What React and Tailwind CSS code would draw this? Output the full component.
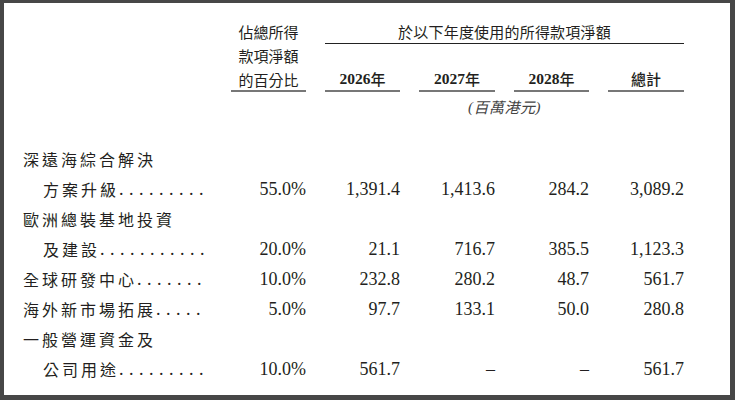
import React from "react";

const CJK = "font-['Noto_Sans_CJK_TC','Noto_Sans_CJK_SC',sans-serif]";
const SERIF = "font-['Liberation_Serif','Noto_Sans_CJK_TC',serif]";

const rows = [
  { label: "深遠海綜合解決", indent: false },
  { label: "方案升級", indent: true, dots: 9, vals: ["55.0%", "1,391.4", "1,413.6", "284.2", "3,089.2"] },
  { label: "歐洲總裝基地投資", indent: false },
  { label: "及建設", indent: true, dots: 11, vals: ["20.0%", "21.1", "716.7", "385.5", "1,123.3"] },
  { label: "全球研發中心", indent: false, dots: 7, vals: ["10.0%", "232.8", "280.2", "48.7", "561.7"] },
  { label: "海外新市場拓展", indent: false, dots: 5, vals: ["5.0%", "97.7", "133.1", "50.0", "280.8"] },
  { label: "一般營運資金及", indent: false },
  { label: "公司用途", indent: true, dots: 9, vals: ["10.0%", "561.7", "–", "–", "561.7"] },
];

const cols = "grid grid-cols-[189px_75px_75px_76px_75px_76px] gap-x-[19px]";

export default function App() {
  return (
    <div className="w-[735px] h-[400px] bg-[#474747] pt-[3px] pl-[4px] pr-[5px] pb-[5px]">
      <div className="h-full bg-white pl-[19px] pt-[17px] text-[#231f20]">
        {/* header */}
        <div className={`${cols} grid-rows-[24px_24px_24px]`}>
          <div className={`col-start-2 row-start-1 row-span-3 flex flex-col items-center border-b-2 border-[#777] text-[15px] leading-[24px] ${CJK}`}>
            <span>佔總所得</span>
            <span>款項淨額</span>
            <span>的百分比</span>
          </div>
          <div className={`col-start-3 col-span-4 row-start-1 flex items-center justify-center border-b border-[#222] text-[15px] leading-[24px] tracking-[0.2px] ${CJK}`}>
            於以下年度使用的所得款項淨額
          </div>
          {["2026", "2027", "2028"].map((y, i) => (
            <div
              key={y}
              className={`row-start-3 flex items-center justify-center border-b-2 border-[#777] text-[15px] leading-[22px] ${i === 0 ? "col-start-3" : i === 1 ? "col-start-4" : "col-start-5"}`}
            >
              <span className="font-['Liberation_Serif',serif] font-bold text-[15.5px]">{y}</span>
              <span className={`${CJK} font-medium`}>年</span>
            </div>
          ))}
          <div className={`col-start-6 row-start-3 flex items-center justify-center border-b-2 border-[#777] text-[15px] leading-[22px] font-medium ${CJK}`}>
            總計
          </div>
        </div>
        <div className={`${cols} h-[30px]`}>
          <div className={`col-start-3 col-span-4 flex items-center justify-center italic text-[15px] text-[#444] tracking-[0.5px] ${SERIF}`}>
            (<span className={CJK}>百萬港元</span>)
          </div>
        </div>
        {/* data */}
        <div className="mt-[22px]">
          {rows.map((r, idx) => (
            <div key={idx} className={`${cols} h-[30px] items-center`}>
              <div className={`flex items-center whitespace-nowrap ${r.indent ? "pl-[20px]" : ""}`}>
                <span className={`text-[16px] leading-[30px] tracking-[3px] ${CJK}`}>{r.label}</span>
                {r.dots ? (
                  <span className="font-['Liberation_Serif',serif] text-[18px] leading-[30px] tracking-[5.5px]">
                    {".".repeat(r.dots)}
                  </span>
                ) : null}
              </div>
              {r.vals
                ? r.vals.map((v, j) => (
                    <div key={j} className="text-right font-['Liberation_Serif',serif] text-[18px] leading-[30px]">
                      {v}
                    </div>
                  ))
                : null}
            </div>
          ))}
        </div>
      </div>
    </div>
  );
}
